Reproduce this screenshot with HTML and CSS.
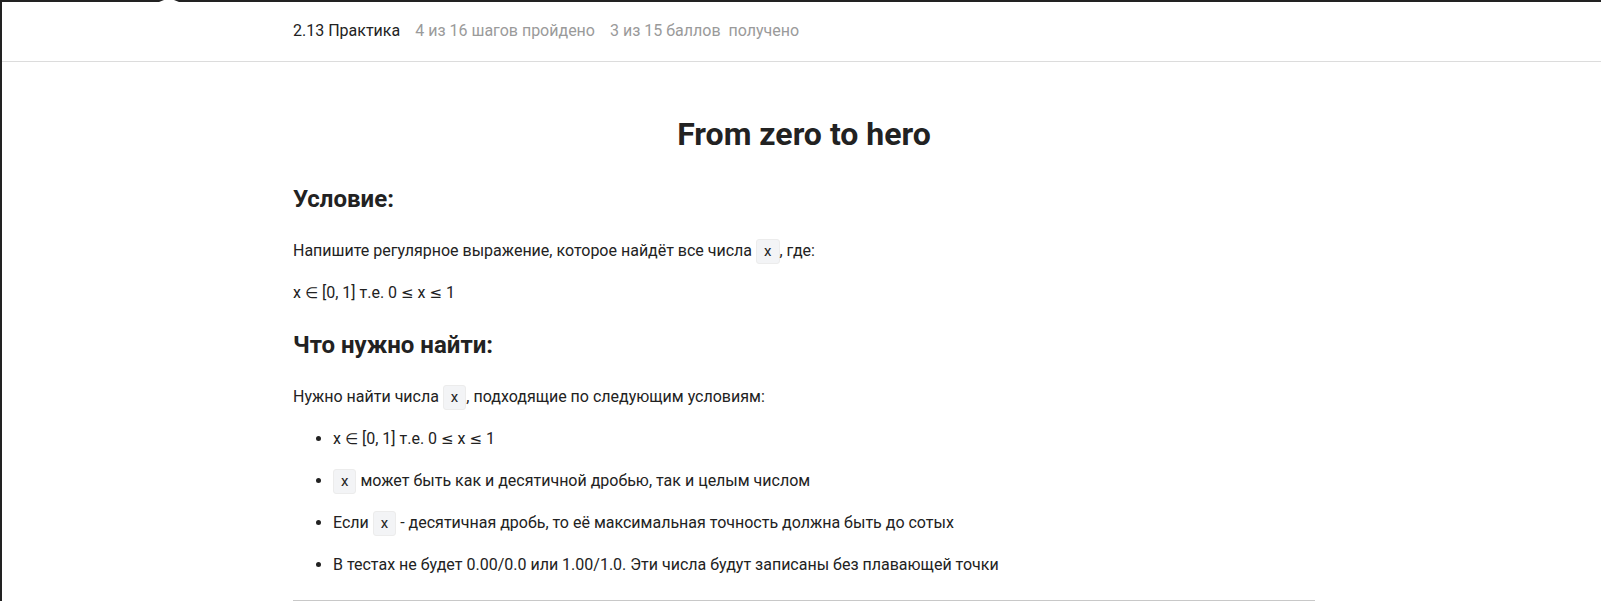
FILE: index.html
```html
<!DOCTYPE html>
<html lang="ru">
<head>
<meta charset="utf-8">
<title>From zero to hero</title>
<link rel="stylesheet" href="styles.css">
</head>
<body>
<div class="frame">
  <div class="notch"></div>
  <header class="topbar">
    <div class="container topbar-inner">
      <span class="lesson">2.13 Практика</span>
      <span class="meta">4 из 16 шагов пройдено</span>
      <span class="meta">3 из 15 баллов&nbsp; получено</span>
    </div>
  </header>
  <main class="container content">
    <h1 class="title">From zero to hero</h1>
    <h2 class="section">Условие:</h2>
    <p class="para">Напишите регулярное выражение, которое найдёт все числа <code class="code">x</code>, где:</p>
    <p class="para">x <span class="sym">∈</span> [0, 1] т.е. 0 <span class="sym">≤</span> x <span class="sym">≤</span> 1</p>
    <h2 class="section">Что нужно найти:</h2>
    <p class="para">Нужно найти числа <code class="code">x</code>, подходящие по следующим условиям:</p>
    <ul class="list">
      <li>x <span class="sym">∈</span> [0, 1] т.е. 0 <span class="sym">≤</span> x <span class="sym">≤</span> 1</li>
      <li><code class="code">x</code> может быть как и десятичной дробью, так и целым числом</li>
      <li>Если <code class="code">x</code> - десятичная дробь, то её максимальная точность должна быть до сотых</li>
      <li>В тестах не будет 0.00/0.0 или 1.00/1.0. Эти числа будут записаны без плавающей точки</li>
    </ul>
    <hr class="rule">
  </main>
</div>
</body>
</html>
```

FILE: styles.css
```css
html, body {
  margin: 0;
  padding: 0;
  background: #fff;
}
body {
  font-family: Roboto, "Liberation Sans", sans-serif;
  color: #222;
  overflow: hidden;
}
.frame {
  position: relative;
  border-top: 2px solid #222;
  border-left: 2px solid #222;
  min-height: 599px;
  box-sizing: border-box;
}
.notch {
  position: absolute;
  top: -2px;
  left: 157px;
  width: 20px;
  height: 2px;
  background: #fff;
  clip-path: polygon(0 100%, 25% 0, 75% 0, 100% 100%);
}
.container {
  width: 1022px;
  margin: 0 auto;
  padding-left: 5px;
}
.topbar {
  height: 59px;
  border-bottom: 1px solid #dcdcdc;
}
.topbar-inner {
  display: flex;
  align-items: center;
  gap: 15px;
  font-size: 16px;
  padding-left: 5px;
  padding-bottom: 2px;
  box-sizing: content-box;
  height: 57px;
}
.lesson {
  color: #222;
}
.meta {
  color: #9a9a9a;
}
.content {
  padding-top: 52px;
}
.title {
  margin: 0 0 29px;
  text-align: center;
  font-size: 32px;
  line-height: 40px;
  font-weight: 700;
  color: #222;
}
.section {
  margin: 23px 0 23px;
  font-size: 24px;
  line-height: 32px;
  font-weight: 700;
}
.title + .section {
  margin-top: 0;
}
.para {
  margin: 0 0 16px;
  font-size: 16px;
  line-height: 26px;
}
.sym {
  font-family: "DejaVu Sans", sans-serif;
  font-size: 15px;
}
.code {
  font-family: Roboto, "Liberation Sans", sans-serif;
  font-size: 15px;
  line-height: 20px;
  display: inline-block;
  padding: 1px 7px 2px;
  background: #f3f4f6;
  border: 1px solid #ececec;
  border-radius: 3px;
  color: #222;
  vertical-align: baseline;
}
.list {
  margin: 0 0 22px;
  padding-left: 40px;
  font-size: 16px;
  line-height: 26px;
}
.list li + li {
  margin-top: 16px;
}
.rule {
  margin: 0;
  border: 0;
  border-top: 1px solid #c8c8c8;
}
```
